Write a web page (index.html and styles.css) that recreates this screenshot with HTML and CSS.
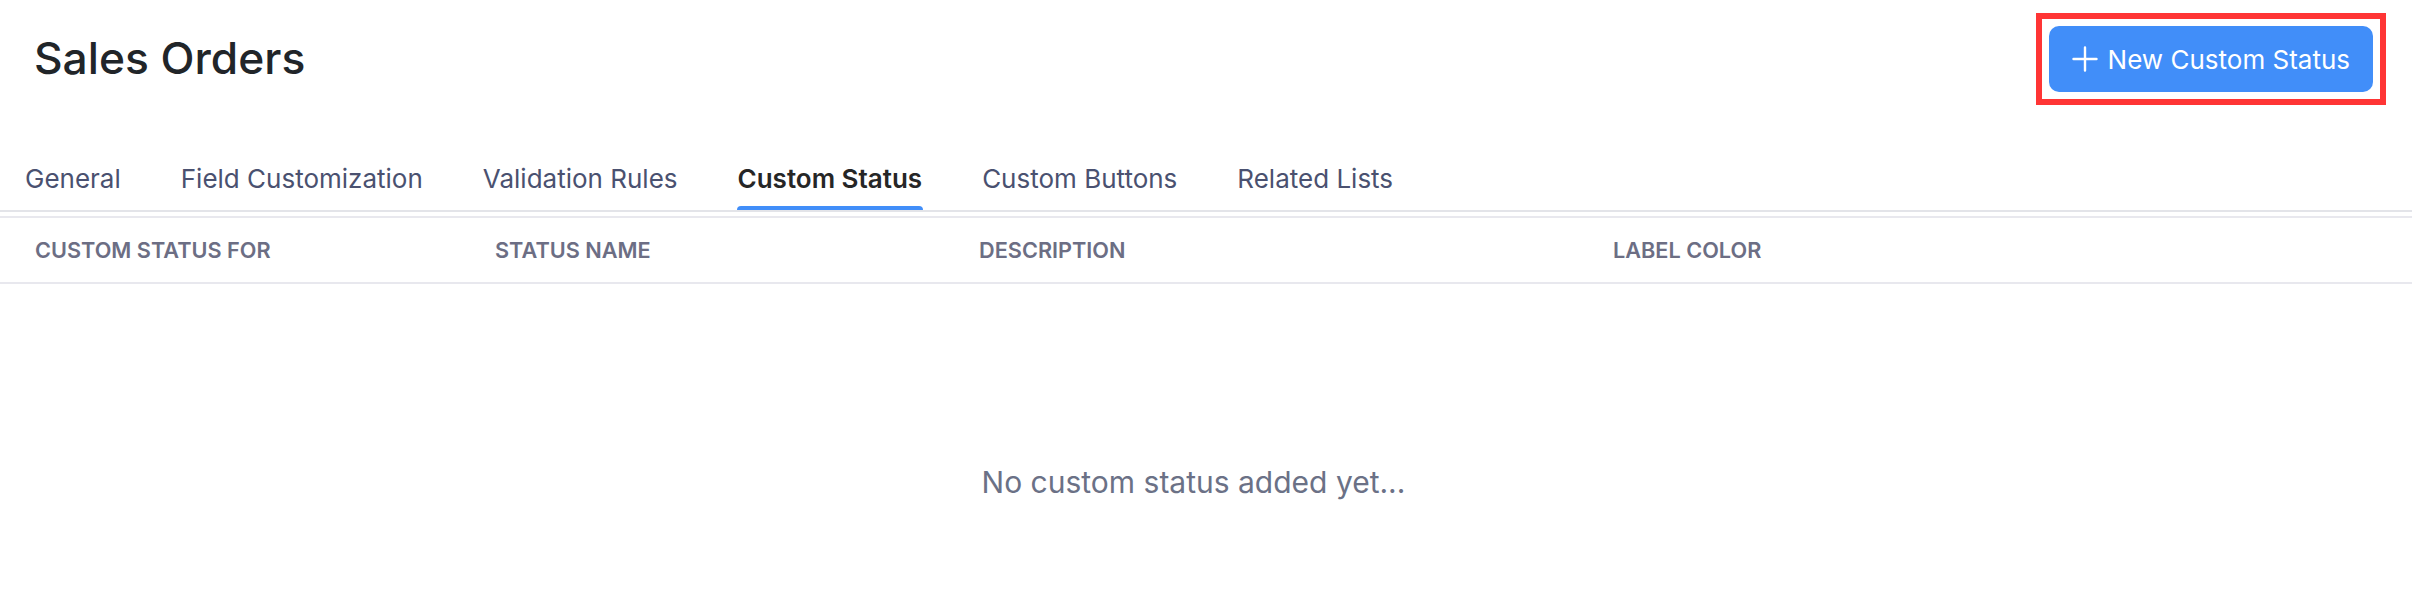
FILE: index.html
```html
<!DOCTYPE html>
<html lang="en">
<head>
<meta charset="utf-8">
<title>Sales Orders</title>
<link rel="stylesheet" href="styles.css">
</head>
<body>
<div class="page">
  <header class="page-header">
    <h1 class="title">Sales Orders</h1>
    <div class="highlight">
      <button class="btn-primary" type="button">
        <svg class="plus" width="26" height="26" viewBox="0 0 26 26" aria-hidden="true">
          <path d="M13 1.5v23M1.5 13h23" stroke="#fff" stroke-width="2.4" stroke-linecap="round" fill="none"/>
        </svg>
        <span>New Custom Status</span>
      </button>
    </div>
  </header>

  <nav class="tabs">
    <a class="tab">General</a>
    <a class="tab">Field Customization</a>
    <a class="tab">Validation Rules</a>
    <a class="tab active">Custom Status</a>
    <a class="tab">Custom Buttons</a>
    <a class="tab">Related Lists</a>
  </nav>

  <section class="table">
    <div class="thead">
      <div class="th">Custom Status For</div>
      <div class="th">Status Name</div>
      <div class="th">Description</div>
      <div class="th">Label Color</div>
    </div>
    <div class="empty">No custom status added yet...</div>
  </section>
</div>
</body>
</html>
```

FILE: styles.css
```css
* { box-sizing: border-box; }

html, body {
  margin: 0;
  padding: 0;
  background: #ffffff;
}

body {
  font-family: Inter, "Noto Sans", "Liberation Sans", sans-serif;
  color: #212529;
}

.page {
  width: 2412px;
  height: 600px;
  overflow: hidden;
}

.page-header {
  display: flex;
  align-items: center;
  justify-content: space-between;
  padding: 13px 26px 0 34px;
}

.title {
  margin: 0;
  font-size: 44.3px;
  font-weight: 500;
  line-height: 1.2;
  color: #212529;
}

.highlight {
  border: 6px solid #ff3535;
  padding: 7px;
  display: flex;
}

.btn-primary {
  display: inline-flex;
  align-items: center;
  gap: 10px;
  height: 66px;
  padding: 0 23px;
  border: none;
  border-radius: 10px;
  background: #418ef9;
  color: #ffffff;
  font-family: Inter, "Noto Sans", sans-serif;
  font-size: 26px;
  font-weight: 400;
  cursor: pointer;
}

.plus { display: block; }

.tabs {
  display: flex;
  gap: 60px;
  padding-left: 25px;
  border-bottom: 2px solid #e3e4e9;
}

.tab {
  position: relative;
  padding: 59px 0 16px;
  font-size: 26px;
  line-height: 30px;
  color: #4a5170;
  white-space: nowrap;
}

.tab.active {
  color: #262626;
  font-weight: 600;
}

.tab.active::after {
  content: "";
  position: absolute;
  left: -1px;
  right: -1px;
  bottom: 0;
  height: 4px;
  border-radius: 4px 4px 0 0;
  background: #418ef9;
}

.table {
  margin-top: 4px;
  border-top: 2px solid #e8e8ee;
}

.thead {
  display: grid;
  grid-template-columns: 460px 484px 634px 1fr;
  height: 66px;
  align-items: center;
  padding-left: 35px;
  border-bottom: 2px solid #e8e8ee;
}

.th {
  font-size: 21.7px;
  font-weight: 600;
  text-transform: uppercase;
  color: #6c6e84;
  white-space: nowrap;
}

.empty {
  padding: 180px 25px 0 0;
  text-align: center;
  font-size: 30px;
  line-height: 36px;
  color: #6b7186;
}
```
